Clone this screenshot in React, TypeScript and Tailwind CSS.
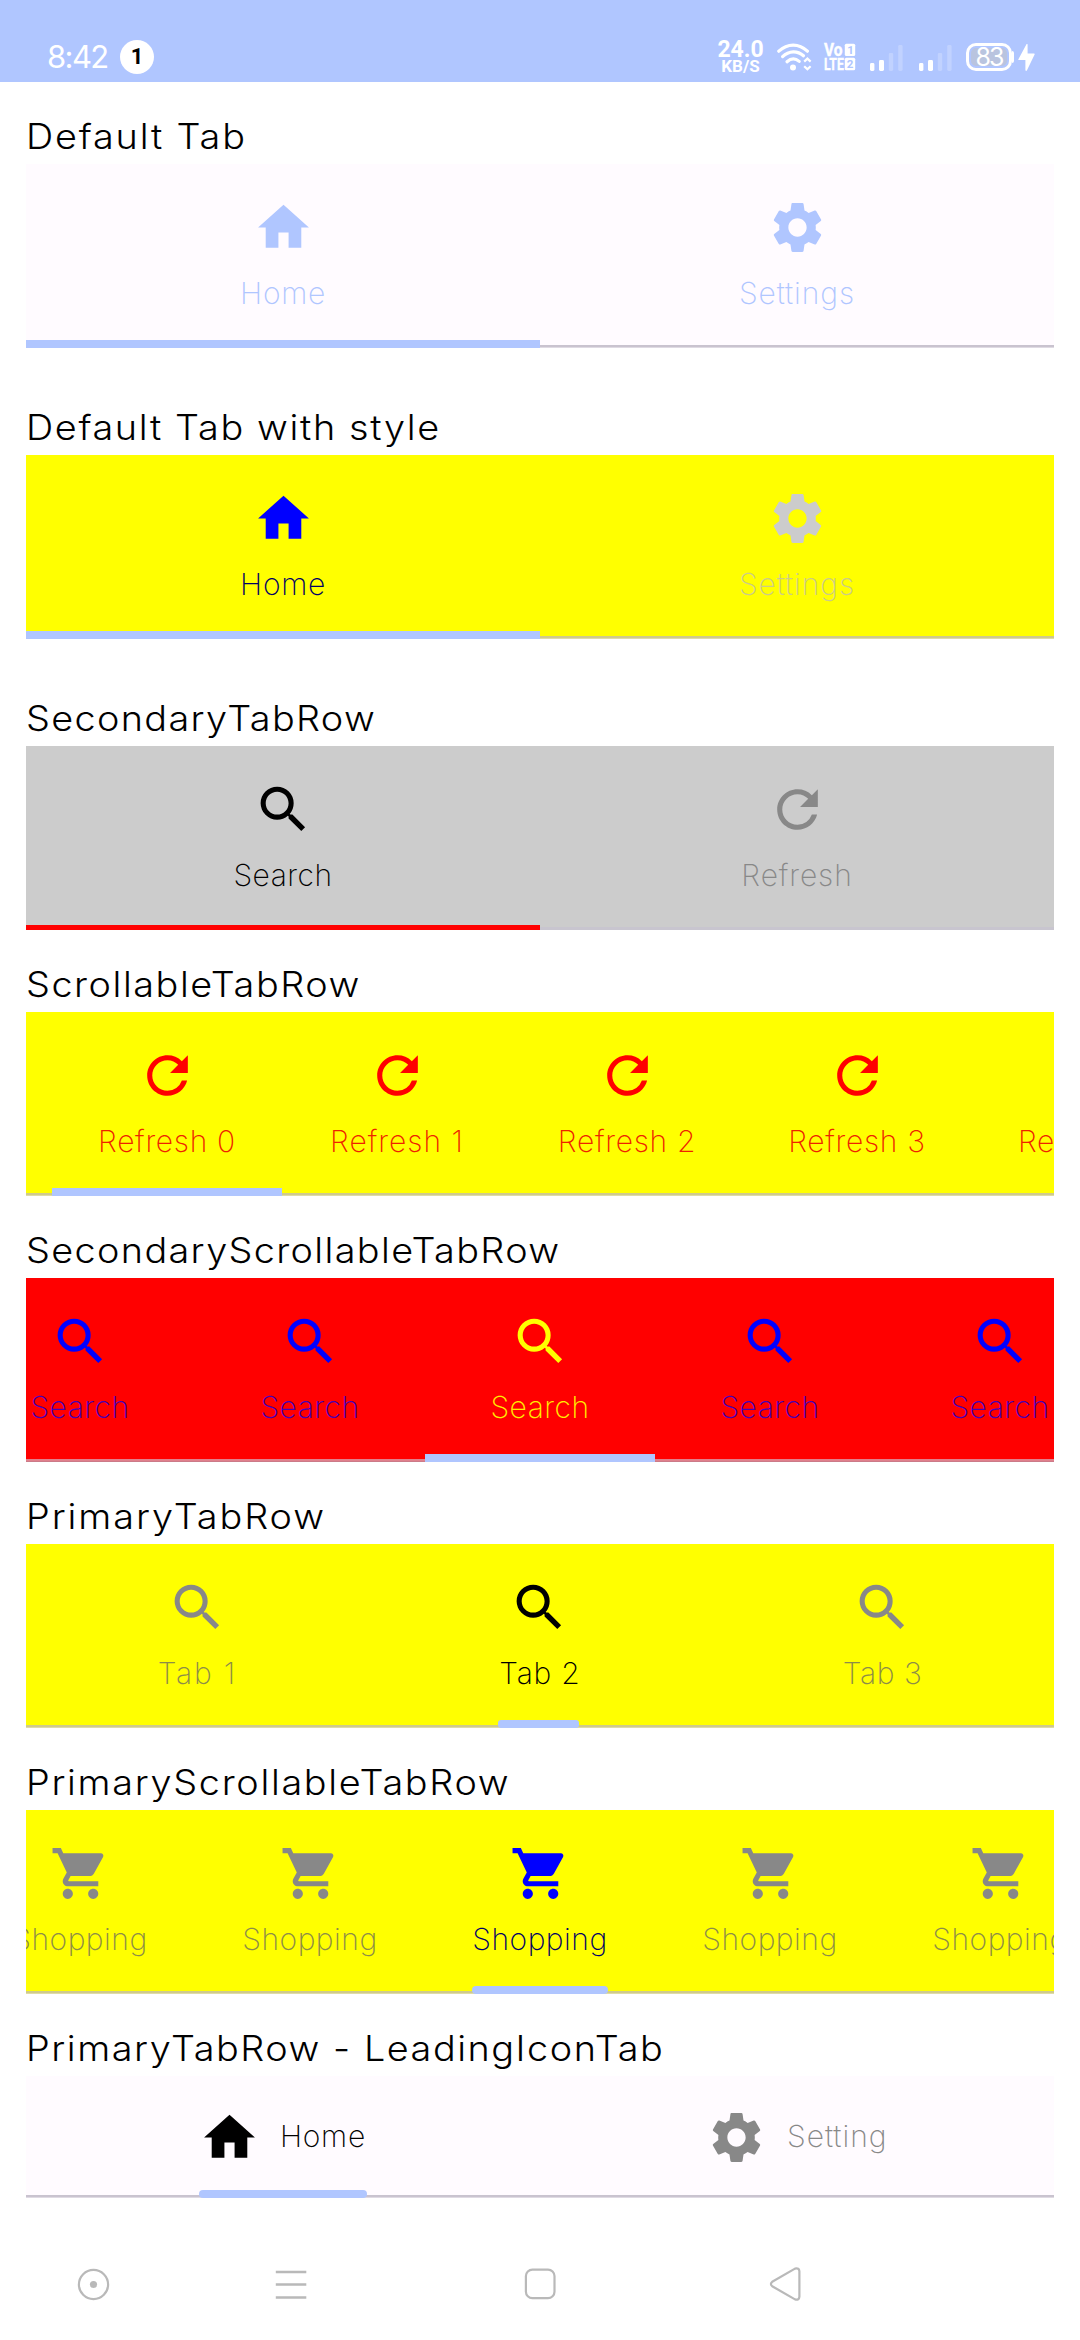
import type { ComponentType, ReactNode } from "react";
import { MdHome, MdRefresh, MdSearch, MdSettings, MdShoppingCart } from "react-icons/md";

type Icon = ComponentType<{ className?: string }>;

interface TabItem {
  icon: Icon;
  label: string;
  iconColor: string;
  labelClass: string;
}

const tab = (icon: Icon, label: string, iconColor: string, labelClass: string): TabItem => ({
  icon,
  label,
  iconColor,
  labelClass,
});

function Tab({ item, width }: { item: TabItem; width: string }) {
  const IconView = item.icon;
  return (
    <div className={`flex shrink-0 flex-col items-center pt-[33px] ${width}`}>
      <IconView className={`size-[61px] shrink-0 ${item.iconColor}`} />
      <span
        className={`mt-[15px] text-[30px] leading-[40px] font-extralight whitespace-nowrap ${item.labelClass}`}
      >
        {item.label}
      </span>
    </div>
  );
}

function LeadingTab({ item, width }: { item: TabItem; width: string }) {
  const IconView = item.icon;
  return (
    <div className="flex flex-1 items-center justify-center">
      <div className={`flex items-center gap-[20px] ${width}`}>
        <IconView className={`size-[61px] shrink-0 ${item.iconColor}`} />
        <span
          className={`pb-[3px] text-[30px] leading-[40px] font-extralight whitespace-nowrap ${item.labelClass}`}
        >
          {item.label}
        </span>
      </div>
    </div>
  );
}

interface SectionProps {
  title: string;
  titleClass: string;
  rowClass: string;
  dividerClass: string;
  indicatorClass: string;
  extra?: boolean;
  height?: string;
  children: ReactNode;
}

function Section({
  title,
  titleClass,
  rowClass,
  dividerClass,
  indicatorClass,
  extra = false,
  height = "h-[184px]",
  children,
}: SectionProps) {
  return (
    <section className={extra ? "mb-[25px]" : ""}>
      <h2
        className={`origin-left scale-x-[1.08] pt-[26px] text-[35px] leading-[56px] font-light whitespace-nowrap text-black ${titleClass}`}
      >
        {title}
      </h2>
      <div className={`relative flex overflow-hidden ${height} ${rowClass}`}>
        {children}
        <div className={`absolute inset-x-0 bottom-0 h-[3px] border-t-2 ${dividerClass}`} />
        <div className={`absolute bottom-0 ${indicatorClass}`} />
      </div>
    </section>
  );
}

function Signal() {
  return (
    <svg className="h-[27px] w-[34px]" viewBox="0 0 34 27" fill="#fff">
      <rect x="1" y="19" width="4.4" height="8" rx="1.4" />
      <rect x="10" y="16" width="5" height="11" rx="1.4" />
      <rect x="19.8" y="9" width="4.4" height="18" rx="1.4" opacity="0.22" />
      <rect x="29.2" y="1" width="4.4" height="26" rx="1.4" opacity="0.22" />
    </svg>
  );
}

function StatusBar() {
  return (
    <header className="flex h-[82px] items-center bg-[#b0c6ff] pt-[32px] pr-[45px] pl-[47px] text-white">
      <span className="w-[73px] font-['Inter'] text-[31px] leading-[40px] tracking-[-1.6px] whitespace-nowrap">
        8:42
      </span>
      <span className="flex size-[34px] items-center justify-center rounded-full bg-white font-['Roboto'] text-[22px] leading-[28px] font-bold text-black">
        1
      </span>
      <div className="ml-auto flex items-center">
        <div className="flex w-[45px] flex-col items-center font-['Roboto'] font-bold">
          <span className="text-[23px] leading-[19px]">24.0</span>
          <span className="text-[17px] leading-[15px]">KB/S</span>
        </div>
        <svg className="ml-[14px] h-[28px] w-[35px]" viewBox="0 0 35 28" fill="none" stroke="#fff">
          <path d="M1.8 8.2C10.5 0 22 0 30.4 8.2" strokeWidth="3.2" strokeLinecap="round" />
          <path d="M5.6 13.6C12 7.4 20.5 7.4 26.5 12.8" strokeWidth="3.2" strokeLinecap="round" />
          <path d="M10 18.8c4-3.6 8.4-3.6 12.2-.4" strokeWidth="3.2" strokeLinecap="round" />
          <circle cx="16" cy="24.4" r="3" fill="#fff" stroke="none" />
          <path d="M27.2 18.6l3.2-3 3.2 3M27.2 23.2l3.2 3 3.2-3" strokeWidth="2.2" />
        </svg>
        <svg
          className="ml-[12px] h-[28px] w-[32px] overflow-visible font-['Roboto'] font-bold"
          viewBox="0 0 32 28"
          fill="#fff"
        >
          <text x="0" y="13" fontSize="17.5" textLength="18.5" lengthAdjust="spacingAndGlyphs" stroke="#fff" strokeWidth="0.4">
            Vo
          </text>
          <text x="0" y="27" fontSize="17" textLength="19.8" lengthAdjust="spacingAndGlyphs" stroke="#fff" strokeWidth="0.4">
            LTE
          </text>
          <rect x="20.8" y="0.8" width="10.4" height="12.2" rx="1.5" />
          <rect x="20.8" y="14.8" width="10.4" height="12.4" rx="1.5" />
          <text x="23.2" y="11" fontSize="11.5" fill="#b0c6ff">
            1
          </text>
          <text x="22.8" y="25.2" fontSize="11.5" fill="#b0c6ff">
            2
          </text>
        </svg>
        <span className="ml-[13px] flex">
          <Signal />
        </span>
        <span className="ml-[15px] flex">
          <Signal />
        </span>
        <span className="ml-[14px] flex h-[28px] w-[46px] items-center justify-center rounded-[10px] border-[3px] border-white bg-[#b9c4df] font-['Inter'] text-[25px] leading-[22px] font-normal tracking-[-2px] ring-2 ring-[#b0c6ff] ring-inset">
          83
        </span>
        <span className="h-[12px] w-[2px] rounded-r-full bg-white" />
        <svg className="ml-[4px] h-[27px] w-[17px]" viewBox="0 0 17 27" fill="#fff">
          <path d="M8.6 0 0.4 15.2q-.4.9.6.9H7.4V26.3q.7 1.2 1.6 0L16.6 10.6q.4-1-.6-1H9.6V.4Q9.2-.4 8.6 0Z" />
        </svg>
      </div>
    </header>
  );
}

function NavBar() {
  return (
    <nav className="mt-[68px] flex h-[36px] items-center">
      <svg className="ml-[77px] size-[33px]" viewBox="0 0 33 33" fill="none" stroke="#b9b9b9">
        <circle cx="16.5" cy="16.5" r="14.6" strokeWidth="2.2" />
        <circle cx="16.5" cy="16.5" r="3.6" fill="#b9b9b9" stroke="none" />
      </svg>
      <svg className="ml-[165px] h-[33px] w-[32px]" viewBox="0 0 32 33" stroke="#b9b9b9">
        <path d="M.8 3.9H31.3M.8 16.6H31.3M.8 29.4H31.3" strokeWidth="2.5" />
      </svg>
      <svg className="ml-[217px] size-[32px]" viewBox="0 0 32 32" fill="none" stroke="#b9b9b9">
        <rect x="1.9" y="1.6" width="28.6" height="28.6" rx="6.5" strokeWidth="2.2" />
      </svg>
      <svg className="ml-[212px] h-[36px] w-[34px]" viewBox="0 0 34 36" fill="none" stroke="#b9b9b9">
        <path
          d="M27 2.6 4.2 15.8Q1.6 18 4.2 20.2L27 33.4Q31.2 34.4 31.4 30.6V5.4Q31.2 1.6 27 2.6Z"
          strokeWidth="2.2"
          strokeLinejoin="round"
        />
      </svg>
    </nav>
  );
}

const yellowDivider = "border-[#cfca8c] bg-[#dfdba6]";
const lightDivider = "border-[#c9c3cf] bg-[#dfdae3]";

const refreshTabs = [
  tab(MdRefresh, "Refresh 0", "text-[#ff0000]", "text-[#ee2200] tracking-[0.7px]"),
  tab(MdRefresh, "Refresh 1", "text-[#ff0000]", "text-[#ee2200] tracking-[1px]"),
  tab(MdRefresh, "Refresh 2", "text-[#ff0000]", "text-[#ee2200] tracking-[0.7px]"),
  tab(MdRefresh, "Refresh 3", "text-[#ff0000]", "text-[#ee2200] tracking-[0.7px]"),
  tab(MdRefresh, "Refresh 4", "text-[#ff0000]", "text-[#ee2200] tracking-[0.7px]"),
];

const searchTabs = [0, 1, 2, 3, 4].map((i) =>
  i === 2
    ? tab(MdSearch, "Search", "text-[#ffff00]", "text-[#ffee00] tracking-[0.5px]")
    : tab(MdSearch, "Search", "text-[#0000ff]", "text-[#4400bb] tracking-[0.5px]"),
);

const primaryTabs = [
  tab(MdSearch, "Tab 1", "text-[#888888]", "text-[#8c8c48] tracking-[1.8px]"),
  tab(MdSearch, "Tab 2", "text-black", "text-black tracking-[0.8px]"),
  tab(MdSearch, "Tab 3", "text-[#888888]", "text-[#8c8c48] tracking-[0.6px]"),
];

const shoppingTabs = [0, 1, 2, 3, 4].map((i) =>
  i === 2
    ? tab(MdShoppingCart, "Shopping", "text-[#0000ff]", "text-[#000066] tracking-[0.5px]")
    : tab(MdShoppingCart, "Shopping", "text-[#888888]", "text-[#8c8c48] tracking-[0.5px]"),
);

export default function App() {
  return (
    <div className="h-[2340px] w-[1080px] overflow-hidden bg-white font-['Inter',sans-serif]">
      <StatusBar />
      <main className="px-[26px]">
        <Section
          title="Default Tab"
          titleClass="tracking-[1.68px]"
          rowClass="bg-[#fffbff]"
          dividerClass={lightDivider}
          indicatorClass="left-0 h-[8px] w-[514px] bg-[#b0c6ff]"
          extra
        >
          <Tab item={tab(MdHome, "Home", "text-[#b0c6ff]", "text-[#b0c6ff] tracking-[0.7px]")} width="w-1/2" />
          <Tab item={tab(MdSettings, "Settings", "text-[#b0c6ff]", "text-[#b0c6ff] tracking-[0.9px]")} width="w-1/2" />
        </Section>
        <Section
          title="Default Tab with style"
          titleClass="tracking-[1.52px]"
          rowClass="bg-[#ffff00]"
          dividerClass={yellowDivider}
          indicatorClass="left-0 h-[8px] w-[514px] bg-[#b0c6ff]"
          extra
        >
          <Tab item={tab(MdHome, "Home", "text-[#0000ff]", "text-[#000066] tracking-[0.7px]")} width="w-1/2" />
          <Tab item={tab(MdSettings, "Settings", "text-[#cccccc]", "text-[#cccc88] tracking-[0.9px]")} width="w-1/2" />
        </Section>
        <Section
          title="SecondaryTabRow"
          titleClass="tracking-[1.25px]"
          rowClass="bg-[#cccccc]"
          dividerClass="border-[#c8c5cf] bg-[#c8c5cf]"
          indicatorClass="left-0 h-[5px] w-[514px] bg-[#ff0000]"
        >
          <Tab item={tab(MdSearch, "Search", "text-black", "text-black tracking-[0.5px]")} width="w-1/2" />
          <Tab item={tab(MdRefresh, "Refresh", "text-[#888888]", "text-[#888888] tracking-[0.9px]")} width="w-1/2" />
        </Section>
        <Section
          title="ScrollableTabRow"
          titleClass="tracking-[1.43px]"
          rowClass="bg-[#ffff00] pl-[26px]"
          dividerClass={yellowDivider}
          indicatorClass="left-[26px] h-[8px] w-[230px] bg-[#b0c6ff]"
        >
          {refreshTabs.map((item) => (
            <Tab key={item.label} item={item} width="w-[230px]" />
          ))}
        </Section>
        <Section
          title="SecondaryScrollableTabRow"
          titleClass="tracking-[1.26px]"
          rowClass="justify-center bg-[#ff0000]"
          dividerClass="border-[#e0808c] bg-[#cc7a88]"
          indicatorClass="left-[399px] h-[8px] w-[230px] bg-[#b0c6ff]"
        >
          {searchTabs.map((item, i) => (
            <Tab key={i} item={item} width="w-[230px]" />
          ))}
        </Section>
        <Section
          title="PrimaryTabRow"
          titleClass="tracking-[1.78px]"
          rowClass="bg-[#ffff00]"
          dividerClass={yellowDivider}
          indicatorClass="left-[472px] h-[8px] w-[81px] rounded-[3px] bg-[#b0c6ff]"
        >
          {primaryTabs.map((item) => (
            <Tab key={item.label} item={item} width="w-1/3" />
          ))}
        </Section>
        <Section
          title="PrimaryScrollableTabRow"
          titleClass="tracking-[1.56px]"
          rowClass="justify-center bg-[#ffff00]"
          dividerClass={yellowDivider}
          indicatorClass="left-[446px] h-[8px] w-[136px] rounded-[4px] bg-[#b0c6ff]"
        >
          {shoppingTabs.map((item, i) => (
            <Tab key={i} item={item} width="w-[230px]" />
          ))}
        </Section>
        <Section
          title="PrimaryTabRow - LeadingIconTab"
          titleClass="tracking-[1.42px]"
          rowClass="bg-[#fffbff]"
          dividerClass={lightDivider}
          indicatorClass="left-[173px] h-[8px] w-[168px] rounded-[4px] bg-[#b0c6ff]"
          height="h-[122px]"
        >
          <LeadingTab item={tab(MdHome, "Home", "text-black", "text-black tracking-[0.7px]")} width="w-[168px]" />
          <LeadingTab item={tab(MdSettings, "Setting", "text-[#888888]", "text-[#888888] tracking-[1px]")} width="w-[182px]" />
        </Section>
      </main>
      <NavBar />
    </div>
  );
}
